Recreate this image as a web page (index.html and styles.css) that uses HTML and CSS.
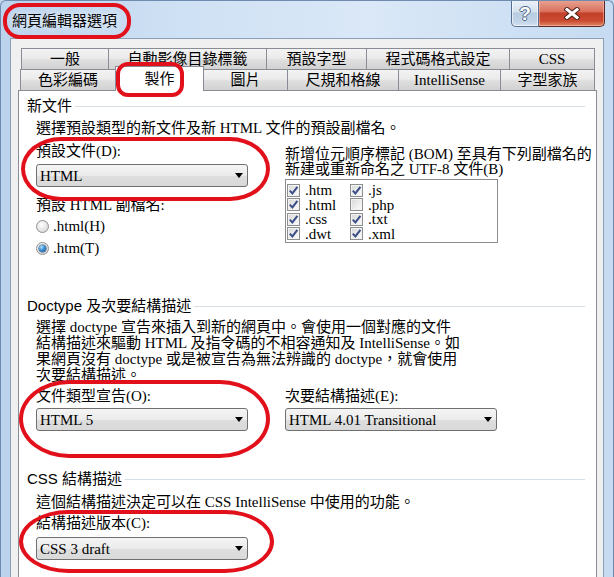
FILE: index.html
```html
<!DOCTYPE html>
<html lang="zh-Hant">
<head>
<meta charset="utf-8">
<title>網頁編輯器選項</title>
<link rel="stylesheet" href="styles.css">
</head>
<body>
<div class="window">
  <div class="titlebar">
    <div class="title">網頁編輯器選項</div>
    <div class="caption-btns">
      <div class="btn-help"><span>?</span></div>
      <div class="btn-close">
        <svg width="16" height="13" viewBox="0 0 16 13">
          <path d="M3 2.5 L13 10.5 M13 2.5 L3 10.5" stroke="#4a2018" stroke-width="5" stroke-linecap="square" fill="none"/>
          <path d="M3 2.5 L13 10.5 M13 2.5 L3 10.5" stroke="#ffffff" stroke-width="3" stroke-linecap="square" fill="none"/>
        </svg>
      </div>
    </div>
  </div>
  <div class="client">
    <div class="tabs">
      <div class="tabrow row1">
        <div class="tab w-general">一般</div>
        <div class="tab w-auto">自動影像目錄標籤</div>
        <div class="tab w-font">預設字型</div>
        <div class="tab w-code">程式碼格式設定</div>
        <div class="tab w-css">CSS</div>
      </div>
      <div class="tabrow row2">
        <div class="tab w-color">色彩編碼</div>
        <div class="tab w-make sel">製作</div>
        <div class="tab w-pic">圖片</div>
        <div class="tab w-ruler">尺規和格線</div>
        <div class="tab w-intel">IntelliSense</div>
        <div class="tab w-family">字型家族</div>
      </div>
    </div>
    <div class="panel">
      <section class="group g1">
        <div class="legend">新文件</div>
        <div class="gbody">
          <p class="desc d1">選擇預設類型的新文件及新 HTML 文件的預設副檔名。</p>
          <div class="cols c1">
            <div class="col-left">
              <div class="lbl">預設文件(D):</div>
              <div class="select s1"><span>HTML</span><i class="arrow"></i></div>
              <div class="lbl lbl2">預設 HTML 副檔名:</div>
              <div class="radios">
                <div class="radio"><span class="rb"></span>.html(H)</div>
                <div class="radio"><span class="rb on"></span>.htm(T)</div>
              </div>
            </div>
            <div class="col-right">
              <div class="bomtext">新增位元順序標記 (BOM) 至具有下列副檔名的<br>新建或重新命名之 UTF-8 文件(B)</div>
              <div class="checklist">
                <div class="ci"><span class="cb on"><svg width="11" height="11" viewBox="0 0 11 11"><path d="M1.8 5.6 L4.4 8.4 L9.4 1.8" stroke="#3b4f86" stroke-width="2" fill="none"/></svg></span>.htm</div>
                <div class="ci"><span class="cb on"><svg width="11" height="11" viewBox="0 0 11 11"><path d="M1.8 5.6 L4.4 8.4 L9.4 1.8" stroke="#3b4f86" stroke-width="2" fill="none"/></svg></span>.html</div>
                <div class="ci"><span class="cb on"><svg width="11" height="11" viewBox="0 0 11 11"><path d="M1.8 5.6 L4.4 8.4 L9.4 1.8" stroke="#3b4f86" stroke-width="2" fill="none"/></svg></span>.css</div>
                <div class="ci"><span class="cb on"><svg width="11" height="11" viewBox="0 0 11 11"><path d="M1.8 5.6 L4.4 8.4 L9.4 1.8" stroke="#3b4f86" stroke-width="2" fill="none"/></svg></span>.dwt</div>
                <div class="ci"><span class="cb on"><svg width="11" height="11" viewBox="0 0 11 11"><path d="M1.8 5.6 L4.4 8.4 L9.4 1.8" stroke="#3b4f86" stroke-width="2" fill="none"/></svg></span>.js</div>
                <div class="ci"><span class="cb"></span>.php</div>
                <div class="ci"><span class="cb on"><svg width="11" height="11" viewBox="0 0 11 11"><path d="M1.8 5.6 L4.4 8.4 L9.4 1.8" stroke="#3b4f86" stroke-width="2" fill="none"/></svg></span>.txt</div>
                <div class="ci"><span class="cb on"><svg width="11" height="11" viewBox="0 0 11 11"><path d="M1.8 5.6 L4.4 8.4 L9.4 1.8" stroke="#3b4f86" stroke-width="2" fill="none"/></svg></span>.xml</div>
              </div>
            </div>
          </div>
        </div>
      </section>

      <section class="group g2">
        <div class="legend">Doctype 及次要結構描述</div>
        <div class="gbody">
          <p class="desc d2">選擇 doctype 宣告來插入到新的網頁中。會使用一個對應的文件<br>結構描述來驅動 HTML 及指令碼的不相容通知及 IntelliSense。如<br>果網頁沒有 doctype 或是被宣告為無法辨識的 doctype，就會使用<br>次要結構描述。</p>
          <div class="cols c2">
            <div class="col-left">
              <div class="lbl">文件類型宣告(O):</div>
              <div class="select s2"><span>HTML 5</span><i class="arrow"></i></div>
            </div>
            <div class="col-right">
              <div class="lbl">次要結構描述(E):</div>
              <div class="select s2"><span>HTML 4.01 Transitional</span><i class="arrow"></i></div>
            </div>
          </div>
        </div>
      </section>

      <section class="group g3">
        <div class="legend">CSS 結構描述</div>
        <div class="gbody">
          <p class="desc d3">這個結構描述決定可以在 CSS IntelliSense 中使用的功能。</p>
          <div class="lbl l3">結構描述版本(C):</div>
          <div class="select s3"><span>CSS 3 draft</span><i class="arrow"></i></div>
        </div>
      </section>
    </div>
  </div>

  <div class="ring ring-title"></div>
  <div class="ring ring-tab"></div>
  <div class="ring ring-doc"></div>
  <div class="ring ring-doctype"></div>
  <div class="ring ring-css"></div>
</div>
</body>
</html>
```

FILE: styles.css
```css
* { box-sizing: border-box; }
html, body { margin: 0; padding: 0; }
body {
  width: 614px;
  height: 577px;
  overflow: hidden;
  font-family: "Liberation Serif", "Noto Sans CJK TC", serif;
  font-size: 15px;
  color: #000;
  background: #c5daf0;
}

.window {
  position: relative;
  width: 614px;
  height: 577px;
  overflow: hidden;
  background: linear-gradient(to right, #bcd3ed 0, #cfe1f4 30%, #dae8f7 60%, #c6dbf1 100%);
  border: 1px solid #6f8bb0;
  border-bottom: none;
  border-radius: 6px 6px 0 0;
}

/* title bar */
.titlebar {
  height: 37px;
  display: flex;
  justify-content: space-between;
  align-items: flex-start;
}
.title {
  padding-left: 11px;
  margin-top: 9px;
  line-height: 20px;
  font-family: "Noto Sans CJK TC", sans-serif;
  font-size: 15px;
  color: #000;
  text-shadow: 0 0 6px rgba(255,255,255,0.9);
}
.caption-btns {
  display: flex;
  margin-right: 8px;
  margin-top: -1px;
}
.btn-help {
  width: 28px;
  height: 27px;
  border: 1px solid #566f90;
  border-top: none;
  border-radius: 0 0 0 5px;
  background: linear-gradient(#eaf1f8 0, #d5e2ef 45%, #b8cce1 50%, #c3d5e8 85%, #d6e4f2 100%);
  display: flex;
  align-items: center;
  justify-content: center;
  box-shadow: inset 0 0 0 1px rgba(255,255,255,0.6);
}
.btn-help span {
  font-family: "Liberation Sans", sans-serif;
  font-weight: bold;
  font-size: 19px;
  line-height: 19px;
  color: #fff;
  text-shadow: 1px 0 0 #4d6585, -1px 0 0 #4d6585, 0 1px 0 #4d6585, 0 -1px 0 #4d6585;
}
.btn-close {
  width: 66px;
  height: 27px;
  border: 1px solid #5c2a22;
  border-top: none;
  border-left: none;
  border-radius: 0 0 5px 0;
  background: linear-gradient(#e8a493 0, #d9705c 45%, #c3402a 50%, #c94a31 80%, #e08868 100%);
  display: flex;
  align-items: center;
  justify-content: center;
  box-shadow: inset 0 0 0 1px rgba(255,200,180,0.5);
}

/* client area */
.client {
  margin: 0 9px;
  height: 560px;
  background: #f0f0f0;
  border: 1px solid #8ba0b8;
  border-bottom: none;
  padding: 9px 6px 0 7px;
}

/* tabs */
.tabs { padding-left: 2px; }
.tabrow {
  display: flex;
  align-items: flex-start;
}
.row1 { margin-left: 1px; }
.tab {
  height: 21px;
  border: 1px solid #898c95;
  border-bottom: none;
  margin-left: -1px;
  background: linear-gradient(#f3f3f3 0, #ebebeb 45%, #dedede 55%, #d2d2d2 100%);
  display: flex;
  align-items: center;
  justify-content: center;
  line-height: 16px;
  white-space: nowrap;
}
.tab:first-child { margin-left: 0; }
.tab.sel {
  background: #fff;
  margin-top: -3px;
  height: 25px;
  margin-bottom: -1px;
  position: relative;
  z-index: 2;
}
.w-general { width: 88px; }
.w-auto { width: 159px; }
.w-font { width: 101px; }
.w-code { width: 144px; }
.w-css { width: 86px; }
.w-color { width: 96px; }
.w-make { width: 89px; }
.w-pic { width: 85px; }
.w-ruler { width: 112px; }
.w-intel { width: 103px; }
.w-family { width: 95px; }

/* panel */
.panel {
  background: #fff;
  border: 1px solid #898c95;
  height: 520px;
  padding: 7px 11px 0 8px;
}
.g2 { margin-top: 39px; }
.g3 { margin-top: 40px; }
.legend {
  display: flex;
  align-items: center;
  height: 16px;
  line-height: 16px;
  white-space: nowrap;
  font-family: "Liberation Sans", "Noto Sans CJK TC", sans-serif;
  font-size: 15px;
}
.legend::after {
  content: "";
  flex: 1;
  height: 1px;
  background: #d5dfe5;
  margin-left: 3px;
}
.gbody { padding-left: 9px; }
.desc {
  margin: 0;
  line-height: 16px;
  white-space: nowrap;
}
.d1 { margin-top: 6px; }
.d2 { margin-top: 5px; }
.d3 { margin-top: 7px; }

.cols {
  display: grid;
  grid-template-columns: 249px 1fr;
}
.c1 { margin-top: 7px; }
.c2 { margin-top: 5px; }

.lbl {
  line-height: 16px;
  height: 16px;
  white-space: nowrap;
}
.lbl2 { margin-top: 10px; }
.l3 { margin-top: 5px; }

.select {
  width: 212px;
  height: 23px;
  border: 1px solid #707070;
  border-radius: 3px;
  background: linear-gradient(#f5f5f5 0, #ebebeb 50%, #dedede 52%, #d9d9d9 100%);
  display: flex;
  align-items: center;
  justify-content: space-between;
  padding: 0 4px 0 3px;
  line-height: 16px;
  white-space: nowrap;
}
.s1 { margin-top: 5px; }
.s2 { margin-top: 4px; }
.s3 { margin-top: 6px; }
.arrow {
  width: 0;
  height: 0;
  border-left: 4.5px solid transparent;
  border-right: 4.5px solid transparent;
  border-top: 5px solid #000;
}

/* radios */
.radios { margin-top: 2px; }
.radio {
  height: 22px;
  display: flex;
  align-items: center;
  line-height: 16px;
}
.rb {
  width: 13px;
  height: 13px;
  border-radius: 50%;
  border: 1px solid #8e8f8f;
  background: radial-gradient(circle at 40% 35%, #ffffff 0, #e9e9e9 45%, #cfcfcf 100%);
  margin-right: 4px;
  display: flex;
  align-items: center;
  justify-content: center;
}
.rb.on::after {
  content: "";
  width: 7px;
  height: 7px;
  border-radius: 50%;
  background: radial-gradient(circle at 35% 30%, #b6e2ff 0, #3b8fd0 45%, #17508b 100%);
  box-shadow: 0 0 0 0.5px #1c4a7a;
}

/* BOM checklist */
.bomtext {
  padding-top: 4px;
  line-height: 15px;
  white-space: nowrap;
}
.checklist {
  margin-top: 2px;
  width: 213px;
  height: 64px;
  border: 1px solid #8c8c8c;
  background: #fff;
  padding: 3px 0 1px 0;
  display: grid;
  grid-template-columns: 63px 1fr;
  grid-template-rows: repeat(4, 14.5px);
  grid-auto-flow: column;
}
.ci {
  display: flex;
  align-items: center;
  padding-left: 1px;
  line-height: 14px;
  white-space: nowrap;
}
.cb {
  width: 13px;
  height: 13px;
  border: 1px solid #8e8f8f;
  background: linear-gradient(135deg, #d6d6d6 0, #efefef 60%, #fbfbfb 100%);
  box-shadow: inset 0 0 0 1px #f2f2f2;
  margin-right: 5px;
  display: flex;
  align-items: center;
  justify-content: center;
  flex: none;
}
.cb svg { display: block; }

/* red annotation rings */
.ring {
  position: absolute;
  border: 4px solid #e2101b;
  pointer-events: none;
  z-index: 5;
}
.ring-title { left: 2px; top: 2px; width: 128px; height: 36px; border-radius: 17px; }
.ring-tab { left: 115px; top: 61px; width: 68px; height: 35px; border-radius: 12px; }
.ring-doc { left: 20px; top: 136px; width: 249px; height: 64px; border-radius: 40px / 32px; }
.ring-doctype { left: 18px; top: 379px; width: 251px; height: 78px; border-radius: 50px / 39px; }
.ring-css { left: 18px; top: 509px; width: 255px; height: 63px; border-radius: 50px / 32px; }
```
